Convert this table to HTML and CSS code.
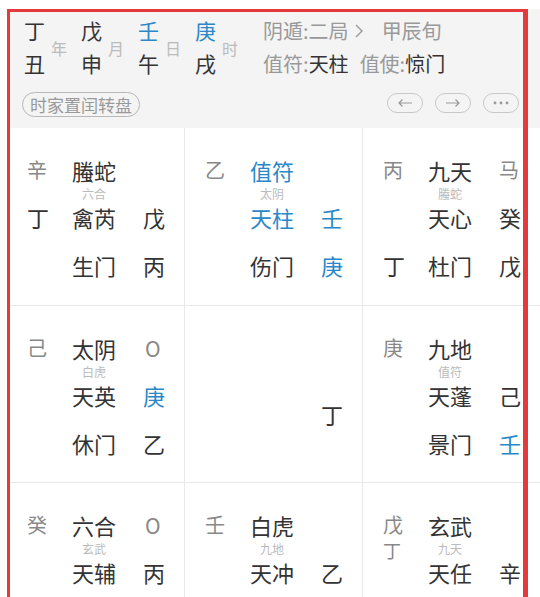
FILE: index.html
```html
<!DOCTYPE html>
<html lang="zh-CN">
<head>
    <meta charset="UTF-8">
    <meta name="viewport" content="width=device-width, initial-scale=1.0">
    <link rel="stylesheet" href="styles.css">
    <title>奇门遁甲排盘</title>
</head>
<body>

    <div class="screen">
        <div class="head">
            <div class="head-top">
                <div class="pillars">
                    <div class="pillar"><div class="gz"><span>丁</span><span>丑</span></div><span class="tag">年</span></div>
                    <div class="pillar"><div class="gz"><span>戊</span><span>申</span></div><span class="tag">月</span></div>
                    <div class="pillar"><div class="gz"><span class="blue">壬</span><span>午</span></div><span class="tag">日</span></div>
                    <div class="pillar"><div class="gz"><span class="blue">庚</span><span>戌</span></div><span class="tag">时</span></div>
                </div>
                <div class="info">
                    <div class="info-line">阴遁:二局<svg class="chev" width="10" height="16" viewBox="0 0 10 16"><path d="M2 2l6 6-6 6" fill="none" stroke="#9a9a9a" stroke-width="1.4"/></svg><span class="xun">甲辰旬</span></div>
                    <div class="info-line">值符:<b>天柱</b><span class="shi">值使:</span><b>惊门</b></div>
                </div>
            </div>
            <div class="head-bar">
                <span class="pill">时家置闰转盘</span>
                <div class="tools">
                    <span class="tool"><svg width="16" height="10" viewBox="0 0 16 10"><path d="M15 5H2M5.5 1.5L2 5l3.5 3.5" fill="none" stroke="#999" stroke-width="1.2"/></svg></span>
                    <span class="tool"><svg width="16" height="10" viewBox="0 0 16 10"><path d="M1 5h13M10.5 1.5L14 5l-3.5 3.5" fill="none" stroke="#999" stroke-width="1.2"/></svg></span>
                    <span class="tool"><svg width="18" height="6" viewBox="0 0 18 6"><circle cx="3" cy="3" r="1.4" fill="#999"/><circle cx="9" cy="3" r="1.4" fill="#999"/><circle cx="15" cy="3" r="1.4" fill="#999"/></svg></span>
                </div>
            </div>
        </div>

        <div class="board">
            <!-- 巽四宫 -->
            <div class="palace">
                <div class="ln"><span class="stem">辛</span><span>螣蛇</span><span></span></div>
                <div class="sub"><span></span><span class="alt">六合</span></div>
                <div class="ln"><span>丁</span><span>禽芮</span><span>戊</span></div>
                <div class="ln last"><span></span><span>生门</span><span>丙</span></div>
            </div>
            <!-- 离九宫 -->
            <div class="palace">
                <div class="ln"><span class="stem">乙</span><span class="blue">值符</span><span></span></div>
                <div class="sub"><span></span><span class="alt">太阴</span></div>
                <div class="ln"><span></span><span class="blue">天柱</span><span class="blue">壬</span></div>
                <div class="ln last"><span></span><span>伤门</span><span class="blue">庚</span></div>
            </div>
            <!-- 坤二宫 -->
            <div class="palace">
                <div class="ln"><span class="stem">丙</span><span>九天</span><span class="stem">马</span></div>
                <div class="sub"><span></span><span class="alt">螣蛇</span></div>
                <div class="ln"><span></span><span>天心</span><span>癸</span></div>
                <div class="ln last"><span>丁</span><span>杜门</span><span>戊</span></div>
            </div>
            <!-- 震三宫 -->
            <div class="palace">
                <div class="ln"><span class="stem">己</span><span>太阴</span><span class="stem ring">O</span></div>
                <div class="sub"><span></span><span class="alt">白虎</span></div>
                <div class="ln"><span></span><span>天英</span><span class="blue">庚</span></div>
                <div class="ln last"><span></span><span>休门</span><span>乙</span></div>
            </div>
            <!-- 中五宫 -->
            <div class="palace center">
                <div class="ln"><span></span><span></span><span>丁</span></div>
            </div>
            <!-- 兑七宫 -->
            <div class="palace">
                <div class="ln"><span class="stem">庚</span><span>九地</span><span></span></div>
                <div class="sub"><span></span><span class="alt">值符</span></div>
                <div class="ln"><span></span><span>天蓬</span><span>己</span></div>
                <div class="ln last"><span></span><span>景门</span><span class="blue">壬</span></div>
            </div>
            <!-- 艮八宫 -->
            <div class="palace">
                <div class="ln"><span class="stem">癸</span><span>六合</span><span class="stem ring">O</span></div>
                <div class="sub"><span></span><span class="alt">玄武</span></div>
                <div class="ln"><span></span><span>天辅</span><span>丙</span></div>
            </div>
            <!-- 坎一宫 -->
            <div class="palace">
                <div class="ln"><span class="stem">壬</span><span>白虎</span><span></span></div>
                <div class="sub"><span></span><span class="alt">九地</span></div>
                <div class="ln"><span></span><span>天冲</span><span>乙</span></div>
            </div>
            <!-- 乾六宫 -->
            <div class="palace">
                <div class="ln"><span class="stem">戊</span><span>玄武</span><span></span></div>
                <div class="sub"><span class="stem small">丁</span><span class="alt">九天</span></div>
                <div class="ln"><span></span><span>天任</span><span>辛</span></div>
            </div>
        </div>
    </div>

    <div class="frame"></div>

</body>
</html>
```

FILE: styles.css
```css
body {
    margin: 0;
    background-color: #fff;
    color: #333;
    font-family: "Noto Sans CJK SC", "Noto Sans", sans-serif;
    overflow: hidden;
}
.screen {
    margin: 9px 0 0 7px;
}
.blue {
    color: #2a88c8;
}

/* en-tête : quatre piliers + infos */
.head {
    height: 119px;
    box-sizing: border-box;
    padding-top: 5px;
    background-color: #f4f4f4;
}
.head-top {
    display: flex;
    padding-left: 17px;
}
.pillars {
    display: flex;
    gap: 14px;
}
.pillar {
    display: flex;
    align-items: center;
    gap: 6px;
}
.gz {
    display: flex;
    flex-direction: column;
    font-size: 21px;
    line-height: 33px;
}
.tag {
    font-size: 16px;
    color: #bbb;
    margin-top: 2px;
}
.info {
    margin-left: 25px;
    font-size: 20px;
    line-height: 33px;
    color: #999;
}
.info-line {
    display: flex;
    align-items: center;
    white-space: pre;
}
.info-line b {
    font-weight: 400;
    color: #333;
}
.chev {
    margin-left: 5px;
}
.xun {
    margin-left: 18px;
}
.shi {
    margin-left: 11px;
}
.head-bar {
    display: flex;
    align-items: center;
    justify-content: space-between;
    margin-top: 12px;
    padding: 0 21px 0 15px;
}
.pill {
    height: 25px;
    box-sizing: border-box;
    padding: 0 7px;
    border: 1px solid #b8b8b8;
    border-radius: 13px;
    font-size: 17px;
    line-height: 23px;
    color: #999;
}
.tools {
    display: flex;
    gap: 12px;
    margin-top: -3px;
}
.tool {
    width: 36px;
    height: 20px;
    box-sizing: border-box;
    border: 1px solid #c8c8c8;
    border-radius: 10px;
    display: flex;
    align-items: center;
    justify-content: center;
}

/* plateau 3 x 3 */
.board {
    display: grid;
    grid-template-columns: 177px 177px 1fr;
    grid-template-rows: 177px 176px 177px;
    gap: 1px;
    background-color: #e8e8e8;
}
.palace {
    background-color: #fff;
    padding: 28px 0 0 20px;
}
.palace.center {
    padding-top: 94px;
}
.ln {
    display: grid;
    grid-template-columns: 45px 71px 1fr;
    align-items: center;
    height: 28px;
    font-size: 22px;
    line-height: 28px;
}
.ln.last {
    margin-top: 20px;
}
.stem {
    font-size: 20px;
    color: #888;
}
.ring {
    font-size: 21px;
    padding-left: 2px;
}
.sub {
    display: grid;
    grid-template-columns: 45px 44px;
    height: 19px;
    line-height: 19px;
}
.stem.small {
    font-size: 18px;
    line-height: 19px;
    margin-top: 2px;
}
.alt {
    font-size: 12px;
    color: #bbb;
    text-align: center;
}

/* cadre rouge d'annotation */
.frame {
    position: absolute;
    left: 7px;
    top: 9px;
    width: 521px;
    height: 600px;
    box-sizing: border-box;
    border: 3px solid #e5393b;
    border-right-width: 5px;
    border-bottom: 0;
}
```
